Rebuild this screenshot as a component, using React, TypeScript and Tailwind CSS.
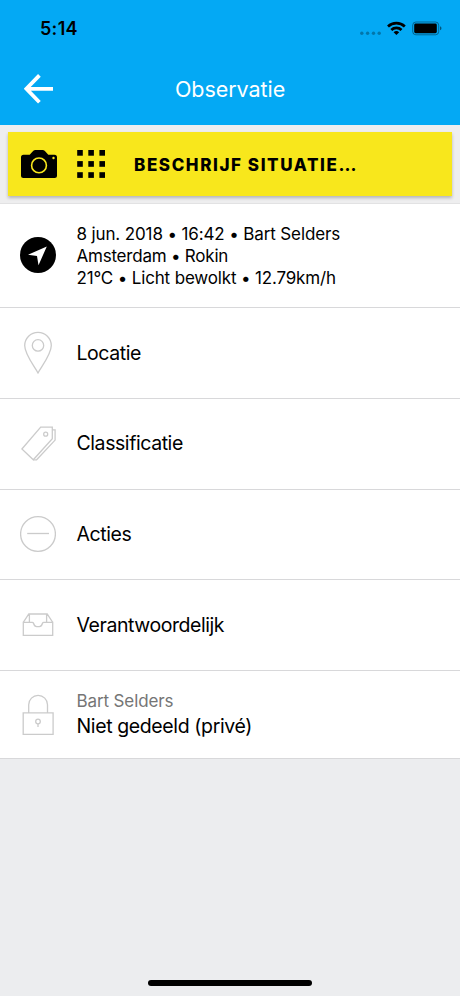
import type { ReactNode } from "react";

function StatusBar() {
  return (
    <div className="flex h-[53px] items-start justify-between pl-10 pr-[18px] text-black">
      <span className="mt-[15px] text-[18px] leading-[27px] font-semibold tracking-[0.3px]">5:14</span>
      <svg className="mt-[18px]" width="84" height="22" viewBox="358 18 84 22">
        <g fillOpacity="0.3">
          <circle cx="361.8" cy="33.2" r="1.7" />
          <circle cx="367.6" cy="33.2" r="1.7" />
          <circle cx="373.5" cy="33.2" r="1.7" />
          <circle cx="379.2" cy="33.2" r="1.7" />
        </g>
        <g fill="none" stroke="#000" strokeWidth="2.7">
          <path d="M388 26.4a12.2 12.2 0 0 1 16.8 0" />
          <path d="M391.3 30a7.4 7.4 0 0 1 10.2 0" />
        </g>
        <path d="M393.6 32.2a4.1 4.1 0 0 1 5.6 0l-2.8 2.9z" />
        <rect x="412.7" y="22" width="26" height="12.8" rx="3.2" fill="none" stroke="#000" strokeOpacity="0.4" />
        <rect x="414.2" y="23.6" width="22.6" height="9.6" rx="1.4" />
        <path d="M440 26.3c2 .8 2 3.2 0 4z" fillOpacity="0.5" />
      </svg>
    </div>
  );
}

function Header() {
  return (
    <header className="h-[125px] bg-[#04a9f4]">
      <StatusBar />
      <div className="flex h-[72px] items-center px-6 text-white">
        <svg width="30" height="30" viewBox="0 0 30 30" fill="none" stroke="currentColor" strokeWidth="3.8">
          <path d="M15.4 1.4 2.4 14.8l13 13.4M2.4 14.8H29" />
        </svg>
        <h1 className="flex-1 pr-[30px] text-center text-[21.5px] tracking-[-0.05px]">Observatie</h1>
      </div>
    </header>
  );
}

function DescribeBar() {
  return (
    <div className="h-[79px] border-b border-[#e2e2e3] bg-[#eeeeef] px-2 pt-[6.5px]">
      <button className="flex h-[64px] w-full items-center bg-[#f8e71c] pl-[13px] shadow-[0_2px_3px_rgba(0,0,0,0.24)]">
        <svg width="36" height="28" viewBox="0 0 36 28">
          <path d="M2.5 4.7h6.2l3.4-3.6Q13 0 14.5 0h7q1.5 0 2.4 1.1l3.4 3.6h6.2Q36 4.7 36 7.2v18.3q0 2.5-2.5 2.5h-31Q0 28 0 25.5V7.2q0-2.5 2.5-2.5z" />
          <circle cx="18" cy="15.4" r="7.4" fill="none" stroke="#f8e71c" strokeWidth="1.6" />
          <circle cx="32.5" cy="8" r="1.2" fill="#f8e71c" />
        </svg>
        <svg className="ml-[20px]" width="28" height="28" viewBox="0 0 28 28">
          {[0, 11.1, 22.2].map((y) =>
            [0, 11.1, 22.2].map((x) => <rect key={`${x}-${y}`} x={x + 0.2} y={y} width="5.6" height="5.7" />)
          )}
        </svg>
        <span className="ml-[29px] pt-[4px] text-[17px] font-extrabold tracking-[1.58px]">BESCHRIJF SITUATIE…</span>
      </button>
    </div>
  );
}

function Row({ icon, height, children }: { icon: ReactNode; height: string; children: ReactNode }) {
  return (
    <li className={`flex items-center gap-[20.5px] border-b border-[#d8d8da] bg-white px-5 ${height}`}>
      {icon}
      <div>{children}</div>
    </li>
  );
}

function LineIcon({ children }: { children: ReactNode }) {
  return (
    <svg width="36" height="44" viewBox="0 0 36 44" fill="none" stroke="#cbcbcb" strokeWidth="1.3">
      {children}
    </svg>
  );
}

function Label({ children }: { children: ReactNode }) {
  return <p className="pt-px text-[19.5px] tracking-[-0.43px]">{children}</p>;
}

export default function App() {
  return (
    <div className="flex h-[996px] w-[460px] flex-col overflow-hidden bg-[#ecedef] font-['Inter',sans-serif] text-black">
      <Header />
      <DescribeBar />
      <ul>
        <Row
          height="h-[104px]"
          icon={
            <svg className="mb-[2px]" width="36" height="36" viewBox="0 0 36 36">
              <circle cx="18" cy="18" r="18" />
              <path d="M26.8 9.5 8 17.7l9 1.3 1.5 9.2z" fill="#fff" />
            </svg>
          }
        >
          <div className="text-[17px] leading-[22px]">
            <p className="tracking-[-0.13px]">8 jun. 2018 • 16:42 • Bart Selders</p>
            <p className="tracking-[-0.22px]">Amsterdam • Rokin</p>
            <p className="tracking-[-0.16px]">21°C • Licht bewolkt • 12.79km/h</p>
          </div>
        </Row>
        <Row
          height="h-[90.5px]"
          icon={
            <LineIcon>
              <path d="M18 42C14.5 35.5 4.7 23.5 4.7 14.6a13.3 13.3 0 0 1 26.6 0C31.3 23.5 21.5 35.5 18 42z" />
              <circle cx="18" cy="14.4" r="5.7" />
            </LineIcon>
          }
        >
          <Label>Locatie</Label>
        </Row>
        <Row
          height="h-[91px]"
          icon={
            <LineIcon>
              <path d="M20.7 5.2h11.6v11.5L13.3 37.8 1.9 27z" />
              <path d="M32.3 7.8h2.8v10.3L16.6 37.8h-3.3" />
              <circle cx="25.7" cy="12.2" r="2" />
            </LineIcon>
          }
        >
          <Label>Classificatie</Label>
        </Row>
        <Row
          height="h-[90.5px]"
          icon={
            <LineIcon>
              <circle cx="18" cy="22" r="17.4" />
              <path d="M7.2 21.5H29" />
            </LineIcon>
          }
        >
          <Label>Acties</Label>
        </Row>
        <Row
          height="h-[91px]"
          icon={
            <LineIcon>
              <path d="M3.3 19.3h8.9q1 0 1.3 1c.6 2 1.4 3.4 3.2 3.4h2.6c1.8 0 2.6-1.4 3.2-3.4q.3-1 1.3-1h8.9v13H3.3z" />
              <path d="M3.3 19.3 8.8 11h18.4l5.5 8.3M9.4 11v8.3M26.6 11v8.3" />
            </LineIcon>
          }
        >
          <Label>Verantwoordelijk</Label>
        </Row>
        <Row
          height="h-[88px]"
          icon={
            <LineIcon>
              <path d="M3.2 19.8h29.9v21.5H3.2zM8.7 19.8v-8a9.4 9.4 0 0 1 18.8 0v8" />
              <circle cx="18" cy="28.5" r="2.3" />
              <path d="M18 30.8v3.2" />
            </LineIcon>
          }
        >
          <p className="text-[17px] leading-6 tracking-[-0.12px] text-[#757575]">Bart Selders</p>
          <p className="pb-[2px] text-[19.5px] leading-[26px] tracking-[-0.38px]">Niet gedeeld (privé)</p>
        </Row>
      </ul>
      <div className="mt-auto mb-[10px] h-[6px] w-[164px] self-center rounded-full bg-black" />
    </div>
  );
}
